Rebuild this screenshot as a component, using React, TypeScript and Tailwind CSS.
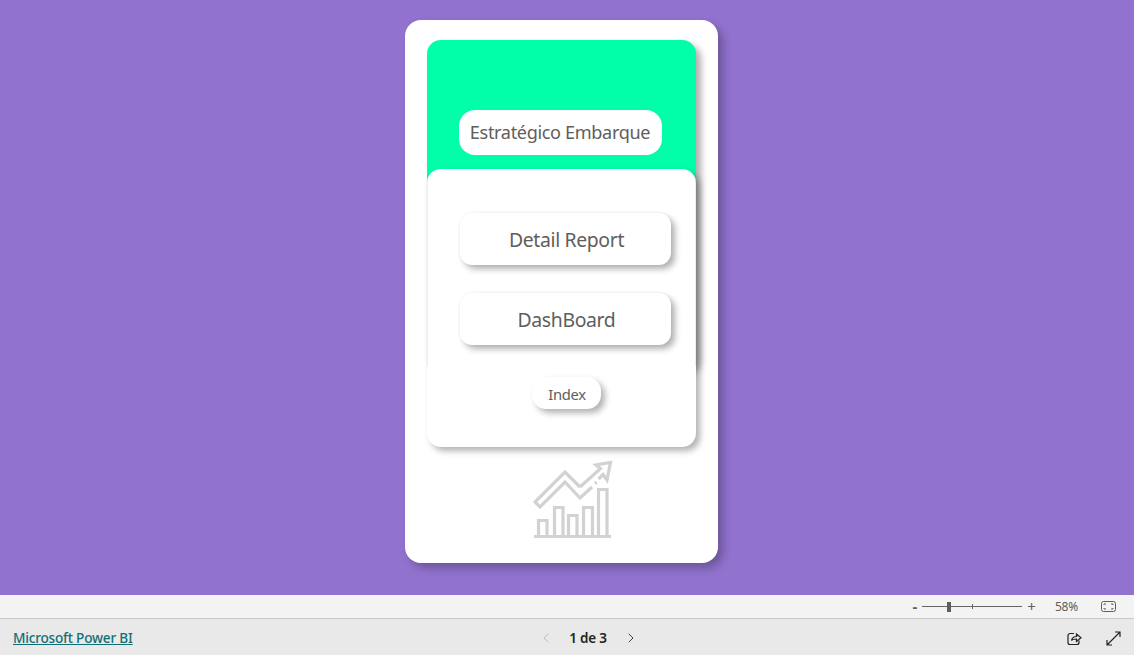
import { ChevronLeft, ChevronRight } from "lucide-react";

const FONT = "font-['Noto_Sans','Open_Sans',sans-serif]";

function MenuButton({ label }: { label: string }) {
  return (
    <button className="flex h-[52px] w-[211px] items-center justify-center rounded-[12px] bg-white pl-[2px] pt-[2px] text-[19.4px] tracking-[-0.35px] text-[#605e5c] shadow-[4px_4px_6px_rgba(0,0,0,0.3),0_0_3px_rgba(0,0,0,0.06)]">
      {label}
    </button>
  );
}

function ChartIcon() {
  return (
    <svg width="80" height="80" viewBox="0 0 80 80" fill="none" stroke="#d2d2d2" strokeWidth="3.2">
      <path d="M1 76.5H78" />
      <path d="M5.5 76V60.5H14V76" />
      <path d="M21.5 76V47.5H30V76" />
      <path d="M35.5 76V55.5H44V76" />
      <path d="M50.5 76V47.5H59.5V76" />
      <path d="M65.5 76V29.5H74V76" />
      <path d="M47 27L32 12L2 42L7 47L32 22L47 38L59 27" />
      <path d="M62 23.5L63.5 22" />
      <path d="M65.5 19L70 14.5L74 20L77.5 2.5L63 5L67.5 8.5L47 27" />
    </svg>
  );
}

function StatusBar() {
  return (
    <div className="flex h-[23px] items-center justify-end bg-[#f3f3f3] pr-[18px] text-[#605e5c]">
      <span className="mr-[5px] text-[15px] font-bold leading-none">-</span>
      <div className="relative flex h-[12px] w-[100px] items-center">
        <div className="h-px w-full bg-[#666666]" />
        <div className="absolute left-[25px] top-px h-[10px] w-[4px] bg-[#605e5c]" />
        <div className="absolute left-[50px] top-[3.5px] h-[5px] w-px bg-[#666666]" />
      </div>
      <span className="ml-[5px] text-[15px] leading-none">+</span>
      <span className="ml-[19px] text-[12px] tracking-[-0.2px]">58%</span>
      <svg className="ml-[23px]" width="15" height="11" viewBox="0 0 15 11" fill="none" stroke="#605e5c">
        <rect x="0.5" y="0.5" width="14" height="10" rx="2" />
        <path d="M3 4V3H5M10 3H12V4M12 7V8H10M5 8H3V7" />
      </svg>
    </div>
  );
}

function Footer() {
  return (
    <div className="grid h-[37px] grid-cols-[1fr_auto_1fr] items-center border-t border-[#c8c8c8] bg-[#e9e9e9] px-[13px] pt-[2px]">
      <a className="mt-[1px] text-[13.6px] font-medium tracking-[-0.2px] text-[#106f75] underline">Microsoft Power BI</a>
      <div className="ml-[43px] flex items-center text-[#252423]">
        <ChevronLeft size={16} strokeWidth={1.5} className="text-[#bdbdbd]" />
        <span className="ml-[15px] mr-[16px] text-[13.5px] font-semibold tracking-[-0.2px]">1 de 3</span>
        <ChevronRight size={16} strokeWidth={1.5} className="text-[#37474f]" />
      </div>
      <div className="flex items-center justify-end gap-[24px]">
        <svg width="15" height="15" viewBox="0 0 15 15" fill="none" stroke="#252423" strokeWidth="1.2">
          <path d="M7 2.5H3A2 2 0 0 0 1 4.5V11.5A2 2 0 0 0 3 13.5H10A2 2 0 0 0 12 11.5V9.5" />
          <path d="M4.5 9.5C5 6.5 7 5.5 9.5 5.5V3L14 6.8L9.5 10.5V8C7.5 8 5.5 8 4.5 9.5Z" />
        </svg>
        <svg width="15" height="15" viewBox="0 0 15 15" fill="none" stroke="#252423" strokeWidth="1.2">
          <path d="M9 1H14V6M14 1L1 14M1 9V14H6" />
        </svg>
      </div>
    </div>
  );
}

export default function App() {
  return (
    <div className={`flex h-[655px] w-[1134px] flex-col overflow-hidden bg-[#9172ce] ${FONT}`}>
      <main className="flex h-[595px] justify-center pr-[11px] pt-[20px]">
        <section className="flex h-[543px] w-[313px] flex-col items-center rounded-[16px] bg-white pt-[20px] shadow-[5px_5px_8px_rgba(0,0,0,0.25)]">
          <div className="relative h-[407px] w-[269px]">
            <div className="flex h-[330px] w-full justify-center rounded-[14px] bg-[#00ffa8] pr-[3px] pt-[70px] shadow-[5px_5px_7px_rgba(0,0,0,0.32)]">
              <div className="flex h-[45px] w-[203px] items-center justify-center rounded-[16px] bg-white text-[18.1px] tracking-[-0.35px] text-[#605e5c]">
                Estratégico Embarque
              </div>
            </div>
            <div className="absolute left-0 top-[129px] flex h-[278px] w-full flex-col items-center gap-[28px] rounded-[14px] bg-white pl-[8px] pt-[44px] shadow-[4px_4px_6px_rgba(0,0,0,0.3)]">
              <MenuButton label="Detail Report" />
              <MenuButton label="DashBoard" />
              <button className="ml-[2px] mt-[4px] flex h-[32px] w-[69px] items-center justify-center rounded-[14px] bg-white pl-[1px] pt-[2px] text-[14.8px] tracking-[-0.3px] text-[#605e5c] shadow-[4px_4px_6px_rgba(0,0,0,0.3)]">
                Index
              </button>
            </div>
            <div className="absolute left-0 top-[140px] h-[186px] w-px bg-[#00ffa8]/20" />
            <div className="absolute right-0 top-[140px] h-[186px] w-px bg-[#00ffa8]/20" />
          </div>
          <div className="mt-[13px] pl-[22px]">
            <ChartIcon />
          </div>
        </section>
      </main>
      <StatusBar />
      <Footer />
    </div>
  );
}
